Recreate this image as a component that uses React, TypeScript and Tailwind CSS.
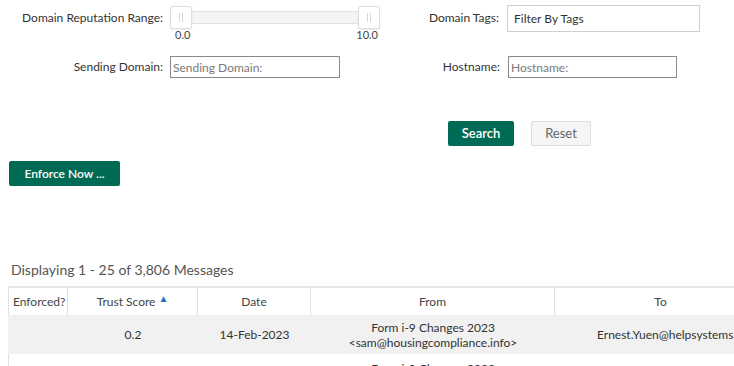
import { useState } from "react";

const font = { fontFamily: "Lato, 'Noto Sans', 'Liberation Sans', sans-serif" };

function Grip() {
    return (
        <div className="flex gap-[2px]">
            <span className="h-[9px] w-px bg-[#d6d6d6]" />
            <span className="h-[9px] w-px bg-[#d6d6d6]" />
        </div>
    );
}

function RangeSlider() {
    return (
        <div className="flex w-[210px] flex-col">
            <div className="flex h-[23px] items-center">
                <div className="z-10 flex h-[23px] w-[22px] items-center justify-center rounded-[3px] border border-[#dedede] bg-white shadow-[0_1px_2px_rgba(0,0,0,0.08)]">
                    <Grip />
                </div>
                <div className="-mx-[2px] h-[13px] flex-1 rounded-[2px] border border-[#e2e2e2] bg-[#f4f4f4]" />
                <div className="z-10 flex h-[23px] w-[22px] items-center justify-center rounded-[3px] border border-[#dedede] bg-white shadow-[0_1px_2px_rgba(0,0,0,0.08)]">
                    <Grip />
                </div>
            </div>
            <div className="-mt-[1px] flex justify-between pl-[5px] pr-[2px] text-[11px] leading-[14px] text-[#444]">
                <span>0.0</span>
                <span>10.0</span>
            </div>
        </div>
    );
}

export default function App() {
    const [domain, setDomain] = useState("");
    const [host, setHost] = useState("");

    return (
        <div className="h-[366px] w-[734px] overflow-hidden bg-white text-[12px] text-[#333]" style={font}>
            {/* filters */}
            <div className="flex items-start">
                <span className="mt-[10px] w-[163px] text-right leading-[16px]">Domain Reputation Range:</span>
                <div className="ml-[7px] mt-[6px]">
                    <RangeSlider />
                </div>
                <span className="mt-[10px] w-[119px] text-right leading-[16px]">Domain Tags:</span>
                <div className="ml-[8px] mt-[5px] flex h-[27px] w-[193px] items-center border border-[#cfcfcf] px-[6px] text-[#333]">
                    Filter By Tags
                </div>
            </div>

            <div className="mt-[14px] flex items-center">
                <span className="w-[163px] text-right leading-[16px]">Sending Domain:</span>
                <input
                    value={domain}
                    onChange={(e) => setDomain(e.target.value)}
                    placeholder="Sending Domain:"
                    className="ml-[7px] h-[22px] w-[170px] border border-[#8a8a8a] px-[2px] text-[12px] outline-none placeholder:text-[#7a7a7a]"
                    style={font}
                />
                <span className="w-[160px] text-right leading-[16px]">Hostname:</span>
                <input
                    value={host}
                    onChange={(e) => setHost(e.target.value)}
                    placeholder="Hostname:"
                    className="ml-[8px] h-[22px] w-[169px] border border-[#8a8a8a] px-[2px] text-[12px] outline-none placeholder:text-[#7a7a7a]"
                    style={font}
                />
            </div>

            <div className="mt-[43px] flex items-center pl-[448px]">
                <button className="h-[25px] w-[66px] rounded-[2px] bg-[#006b54] text-[13px] font-semibold text-white">
                    Search
                </button>
                <button className="ml-[17px] h-[25px] w-[60px] rounded-[2px] border border-[#dcdcdc] bg-[#f5f5f5] text-[13px] text-[#666]">
                    Reset
                </button>
            </div>

            <div className="mt-[15px] pl-[9px]">
                <button className="h-[25px] w-[111px] rounded-[2px] bg-[#006b54] text-[12px] font-semibold text-white">
                    Enforce Now ...
                </button>
            </div>

            <div className="mt-[75px] pl-[11px] text-[14px] leading-[18px] text-[#555]">
                Displaying 1 - 25 of 3,806 Messages
            </div>

            <div className="ml-[8px] mt-[7px] w-[760px]">
                <div className="flex h-[29px] border-t-2 border-[#e6e6e6] text-[12px] text-[#444]">
                    <div className="flex w-[60px] items-center border-l border-r border-[#e0e0e0] pl-[4px]">Enforced?</div>
                    <div className="flex w-[130px] items-center justify-center border-r border-[#e0e0e0]">
                        Trust Score
                        <span className="ml-[3px] -mt-[7px] text-[10px] leading-[10px] text-[#1a73c8]">▲</span>
                    </div>
                    <div className="flex w-[113px] items-center justify-center border-r border-[#e0e0e0]">Date</div>
                    <div className="flex w-[244px] items-center justify-center border-r border-[#e0e0e0]">From</div>
                    <div className="flex w-[211px] items-center justify-center">To</div>
                </div>
                <div className="flex h-[39px] bg-[#f1f1f1] text-[12px] leading-[15px] text-[#333]">
                    <div className="w-[60px]" />
                    <div className="flex w-[130px] items-center justify-center">0.2</div>
                    <div className="flex w-[113px] items-center justify-center">14-Feb-2023</div>
                    <div className="flex w-[244px] flex-col items-center justify-center">
                        <span>Form i-9 Changes 2023</span>
                        <span>&lt;sam@housingcompliance.info&gt;</span>
                    </div>
                    <div className="flex w-[211px] items-center justify-start pl-[42px] whitespace-nowrap">Ernest.Yuen@helpsystems.com</div>
                </div>
                <div className="flex h-[30px] border-l border-[#e0e0e0] text-[12px] leading-[15px] text-[#333]">
                    <div className="w-[59px]" />
                    <div className="w-[130px]" />
                    <div className="w-[113px]" />
                    <div className="flex w-[244px] flex-col items-center pt-[7px]">
                        <span>Form i-9 Changes 2023</span>
                    </div>
                </div>
            </div>
        </div>
    );
}
